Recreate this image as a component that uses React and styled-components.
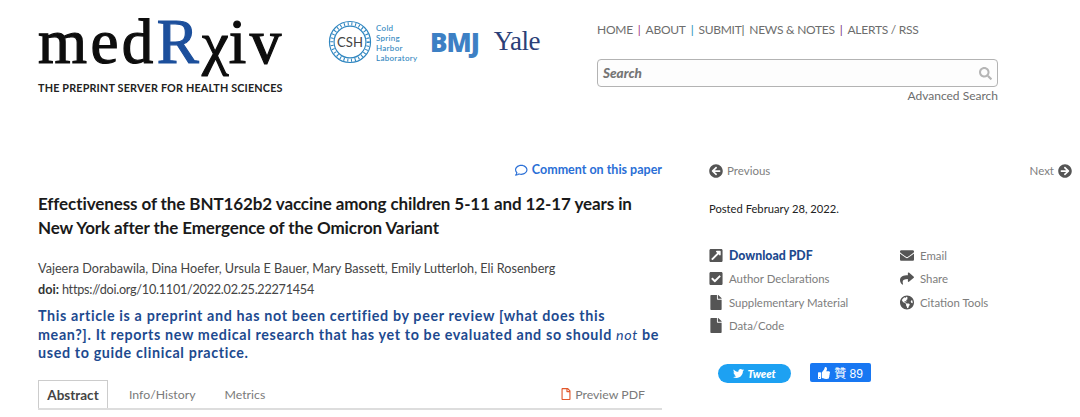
import React from "react";
import styled, { createGlobalStyle } from "styled-components";
import {
  FaArrowCircleLeft, FaArrowCircleRight, FaExternalLinkSquareAlt, FaCheckSquare, FaFile,
  FaEnvelope, FaShare, FaGlobeAmericas, FaSearch, FaRegComment, FaRegFile, FaTwitter, FaThumbsUp,
} from "react-icons/fa";

const Global = createGlobalStyle`
  html, body { margin: 0; padding: 0; background: #fff; }
  body { font-family: Lato, "Open Sans", sans-serif; overflow: hidden; }
  * { box-sizing: border-box; }
`;

const Page = styled.div`
  width: 1080px; height: 417px; overflow: hidden; background: #fff;
`;
const Header = styled.header`
  display: flex; height: 160px; padding: 0 0 0 38px;
`;
const LogoBlock = styled.div`
  width: 246px; padding-top: 11px; display: flex; flex-direction: column;
`;
const Wordmark = styled.div`
  font-family: "Liberation Serif", serif; font-size: 63px; line-height: 62px; height: 62px; color: #0d0d0d;
  letter-spacing: 3.4px; -webkit-text-stroke: 1.2px #0d0d0d; white-space: nowrap;
`;
const BlueR = styled.span`
  color: #1c4f9c; -webkit-text-stroke: 1.2px #1c4f9c;
`;
const Chi = styled.span`
  font-size: 60px; letter-spacing: 0;
`;
const Tagline = styled.div`
  margin-top: 8px; font-size: 10.8px; line-height: 14px; font-weight: 700; color: #222; white-space: nowrap; letter-spacing: 0.17px;
`;
const Partners = styled.div`
  display: flex; align-items: flex-start; margin-left: 44px; width: 269px; padding-top: 20px;
`;
const CshLabel = styled.div`
  font-size: 8px; line-height: 10px; color: #2f86c0; margin: 3px 0 0 4px; width: 44px; font-weight: 500; letter-spacing: .3px;
`;
const Bmj = styled.div`
  font-family: "Open Sans", sans-serif; font-size: 26px; line-height: 30px; font-weight: 800; color: #3d80c4; margin: 7px 0 0 10px; letter-spacing: -1px;
`;
const Yale = styled.div`
  font-family: "Liberation Serif", serif; font-size: 27px; line-height: 30px; color: #2b3f78; margin: 6px 0 0 15px; letter-spacing: -0.5px;
`;
const NavColumn = styled.div`
  width: 401px; padding-top: 22px; display: flex; flex-direction: column;
`;
const Nav = styled.nav`
  display: flex; font-size: 12px; line-height: 16px; color: #6d6d6d; white-space: nowrap; letter-spacing: -0.26px;
`;
const NavSep = styled.span`
  color: ${p => p.$c}; margin: 0 ${p => p.$r ?? 5}px 0 ${p => p.$l ?? 5}px;
`;
const SearchBox = styled.div`
  margin-top: 21px; height: 28px; border: 1px solid #b3b3b3; border-radius: 4px; background: #fdfdfd;
  display: flex; align-items: center; justify-content: space-between; padding: 0 5px;
  font-size: 13.5px; font-weight: 900; font-style: italic; color: #757575;
  svg { color: #b5b5b5; font-size: 13px; }
`;
const AdvSearch = styled.div`
  margin-top: 1px; text-align: right; font-size: 12px; line-height: 16px; color: #6d6d6d;
`;
const Main = styled.main`
  display: flex; padding-left: 38px;
`;
const Left = styled.div`
  width: 624px; display: flex; flex-direction: column;
`;
const CommentLink = styled.div`
  display: flex; justify-content: flex-end; align-items: center; gap: 4px; font-size: 12.5px; line-height: 20px; font-weight: 700; color: #2a6fd6;
`;
const Title = styled.h1`
  margin: 12px 0 0; font-size: 17px; line-height: 24px; font-weight: 700; color: #1a1a1a; width: 610px; letter-spacing: -0.1px;
`;
const Authors = styled.div`
  margin-top: 19px; font-size: 12.65px; line-height: 20px; color: #444; white-space: nowrap;
`;
const Doi = styled.div`
  margin-top: 1px; font-size: 12.65px; line-height: 20px; color: #444; white-space: nowrap; letter-spacing: -0.25px; b { color: #333; letter-spacing: 0; }
`;
const Warning = styled.p`
  margin: 7px 0 0; font-size: 14.3px; line-height: 18.6px; font-weight: 700; color: #1d4a8f; letter-spacing: 0.64px;
  em { font-weight: 400; }
`;
const Tabs = styled.div`
  margin-top: 18px; display: flex; align-items: center; height: 29px; border-bottom: 2px solid #ddd; font-size: 12.3px; color: #7a7a7a;
`;
const ActiveTab = styled.div`
  height: 28px; width: 70px; justify-content: center; border: 1px solid #ccc; border-bottom: none; display: flex; align-items: center; font-size: 13.5px; font-weight: 700; color: #444; margin-right: 21px;
`;
const Tab = styled.div`
  margin-right: 29px;
`;
const PreviewPdf = styled.div`
  margin-left: auto; margin-right: 17px; display: flex; align-items: center; gap: 3px;
  svg { color: #e2572b; font-size: 12px; }
`;
const Right = styled.aside`
  margin-left: 47px; width: 363px;
`;
const Pager = styled.div`
  display: flex; justify-content: space-between; font-size: 11.5px; line-height: 18px; color: #808080; margin-top: 2px;
`;
const PagerLink = styled.span`
  display: flex; align-items: center; gap: 4px; svg { color: #555; font-size: 14px; }
`;
const Posted = styled.div`
  margin-top: 20px; font-size: 11.2px; line-height: 18px; color: #222;
`;
const Tools = styled.div`
  margin-top: 26px; display: grid; grid-template-columns: 191px 1fr; grid-auto-rows: 23.3px;
`;
const Tool = styled.div`
  display: flex; align-items: center; gap: 6px; white-space: nowrap;
  font-size: ${p => p.$strong ? 12.3 : 11.4}px;
  color: ${p => p.$strong ? "#1d4a8f" : "#7d7d7d"}; font-weight: ${p => p.$strong ? 900 : 400};
  svg { color: #555; font-size: 15px; width: 14px; flex: none; }
`;
const Social = styled.div`
  margin-top: 27px; margin-left: 9px; display: flex; align-items: center; gap: 19px;
`;
const Tweet = styled.div`
  width: 73px; height: 19px; border-radius: 10px; background: #1da1f2; color: #fff; font-size: 11px; font-weight: 900; font-style: italic;
  display: flex; align-items: center; justify-content: center; gap: 3px;
`;
const Like = styled.div`
  width: 61px; height: 19px; border-radius: 2px; background: #1877f2; color: #fff; font-size: 12px; font-family: "Liberation Sans", "Noto Sans CJK TC", sans-serif;
  display: flex; align-items: center; justify-content: center; gap: 4px; margin-top: -2px;
`;

const CshLogo = () => (
  <svg width="44" height="44" viewBox="0 0 42 42" fill="none">
    <circle cx="21" cy="21" r="19.6" stroke="#2f86c0" strokeWidth="1.1" />
    <circle cx="21" cy="21" r="15.2" stroke="#2f86c0" strokeWidth="1.1" />
    <circle cx="21" cy="21" r="17.4" stroke="#2f86c0" strokeWidth="3" strokeDasharray="1 2.6" />
    <text x="21" y="25.5" textAnchor="middle" fontFamily="Lato, sans-serif" fontSize="12.5" fill="#444">CSH</text>
  </svg>
);

export default function App() {
  return (
    <Page>
      <Global />
      <Header>
        <LogoBlock>
          <Wordmark>med<BlueR>R</BlueR><Chi>χ</Chi>iv</Wordmark>
          <Tagline>THE PREPRINT SERVER FOR HEALTH SCIENCES</Tagline>
        </LogoBlock>
        <Partners>
          <CshLogo />
          <CshLabel>Cold<br />Spring<br />Harbor<br />Laboratory</CshLabel>
          <Bmj>BMJ</Bmj>
          <Yale>Yale</Yale>
        </Partners>
        <NavColumn>
          <Nav>
            HOME<NavSep $c="#a0307f">|</NavSep>ABOUT<NavSep $c="#2a8fb5">|</NavSep>SUBMIT<NavSep $c="#555" $l={0}>|</NavSep>NEWS &amp; NOTES<NavSep $c="#7a2f80">|</NavSep>ALERTS / RSS
          </Nav>
          <SearchBox>Search<FaSearch /></SearchBox>
          <AdvSearch>Advanced Search</AdvSearch>
        </NavColumn>
      </Header>
      <Main>
        <Left>
          <CommentLink><FaRegComment />Comment on this paper</CommentLink>
          <Title>Effectiveness of the BNT162b2 vaccine among children 5-11 and 12-17 years in New York after the Emergence of the Omicron Variant</Title>
          <Authors>Vajeera Dorabawila, Dina Hoefer, Ursula E Bauer, Mary Bassett, Emily Lutterloh, Eli Rosenberg</Authors>
          <Doi><b>doi:</b> https://doi.org/10.1101/2022.02.25.22271454</Doi>
          <Warning>This article is a preprint and has not been certified by peer review [what does this mean?]. It reports new medical research that has yet to be evaluated and so should <em>not</em> be used to guide clinical practice.</Warning>
          <Tabs>
            <ActiveTab>Abstract</ActiveTab>
            <Tab>Info/History</Tab>
            <Tab>Metrics</Tab>
            <PreviewPdf><FaRegFile />Preview PDF</PreviewPdf>
          </Tabs>
        </Left>
        <Right>
          <Pager>
            <PagerLink><FaArrowCircleLeft />Previous</PagerLink>
            <PagerLink>Next<FaArrowCircleRight /></PagerLink>
          </Pager>
          <Posted>Posted February 28, 2022.</Posted>
          <Tools>
            <Tool $strong><FaExternalLinkSquareAlt />Download PDF</Tool>
            <Tool><FaEnvelope />Email</Tool>
            <Tool><FaCheckSquare />Author Declarations</Tool>
            <Tool><FaShare />Share</Tool>
            <Tool><FaFile />Supplementary Material</Tool>
            <Tool><FaGlobeAmericas />Citation Tools</Tool>
            <Tool><FaFile />Data/Code</Tool>
          </Tools>
          <Social>
            <Tweet><FaTwitter />Tweet</Tweet>
            <Like><FaThumbsUp />贊 89</Like>
          </Social>
        </Right>
      </Main>
    </Page>
  );
}
